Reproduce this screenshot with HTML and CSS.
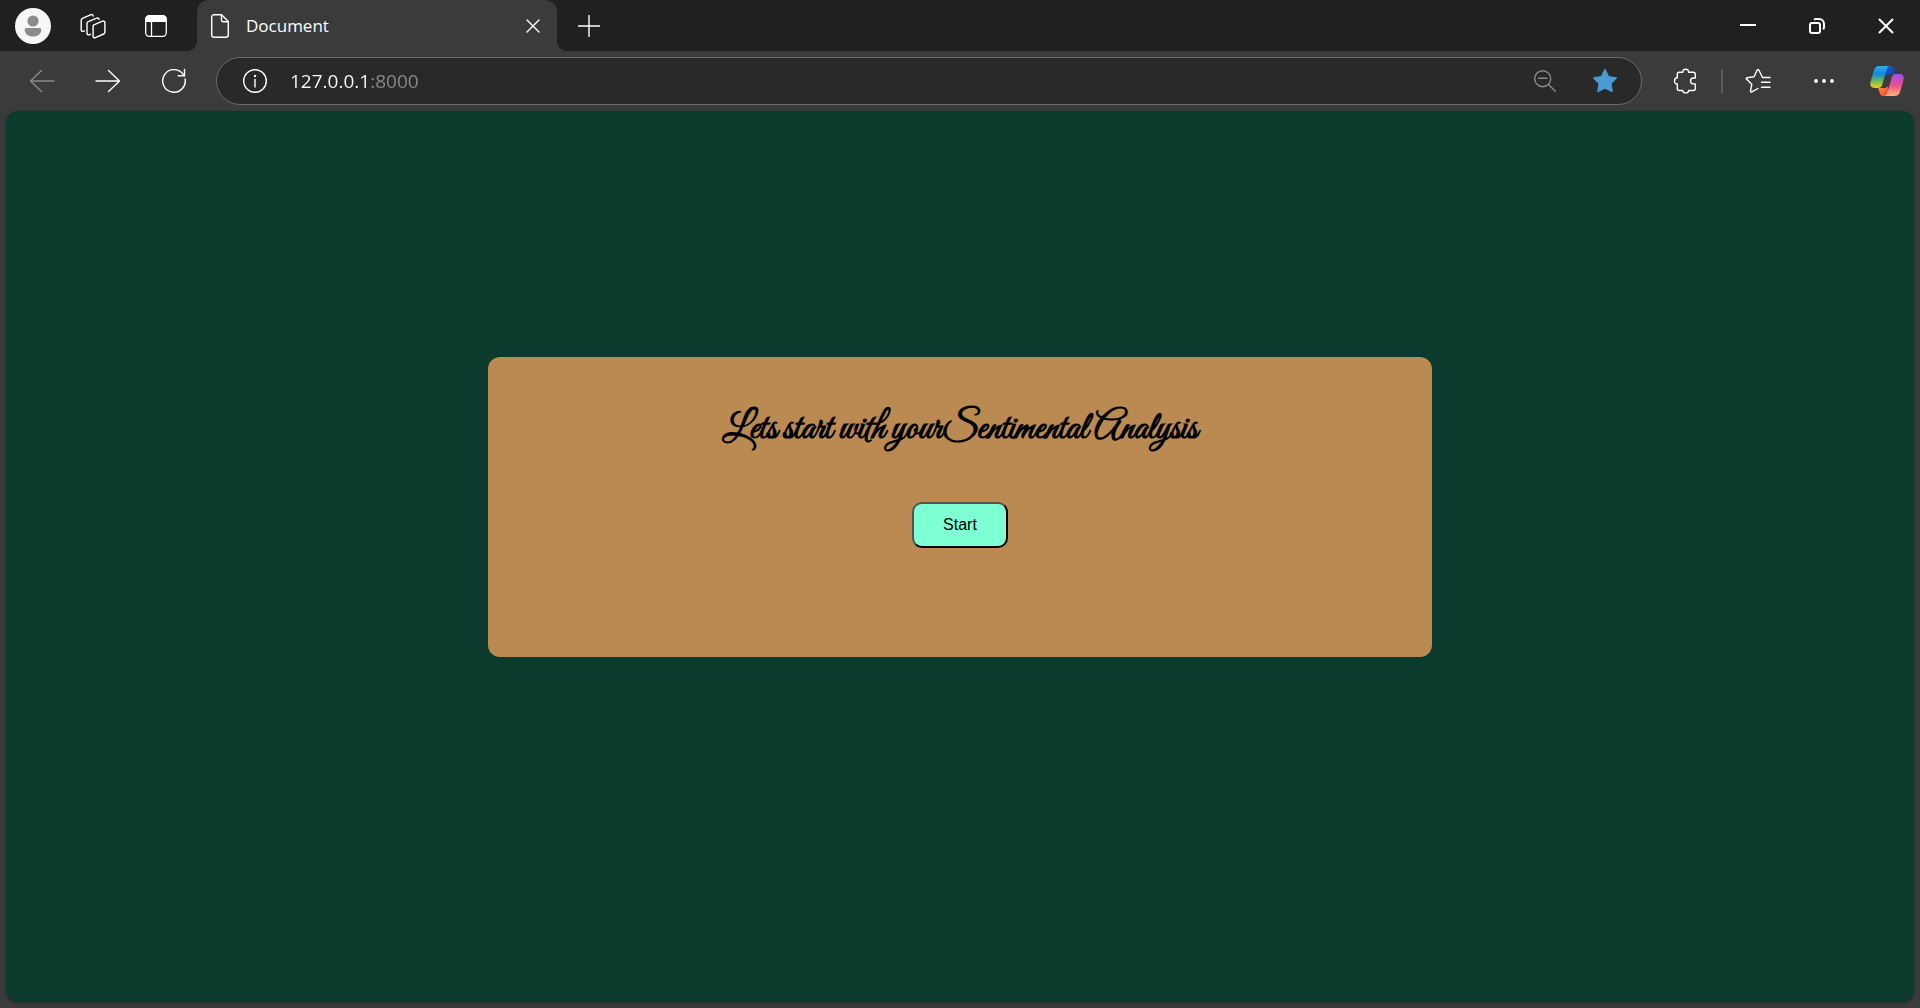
FILE: index.html
```html
<!DOCTYPE html>
<html lang="en">
<head>
<meta charset="utf-8">
<meta name="viewport" content="width=device-width, initial-scale=1">
<title>Document</title>
<link rel="stylesheet" href="styles.css">
</head>
<body>
<header class="tab-strip">
  <button class="icon-button profile" aria-label="Profile">
    <svg width="36" height="36" viewBox="0 0 36 36"><circle cx="18" cy="18" r="18" fill="#f7f7f7"/><circle cx="18" cy="13" r="5.6" fill="#8b8b8b"/><path d="M11.5 20h13a1.8 1.8 0 0 1 1.8 1.8C26.300 26 22.600 28.600 18 28.600S9.700 26 9.700 21.800A1.800 1.800 0 0 1 11.500 20z" fill="#8b8b8b"/></svg>
  </button>
  <button class="icon-button workspaces" aria-label="Workspaces">
    <svg class="line" width="26" height="26" viewBox="0 0 26 26"><path d="M13.800 11.800 22.600 8.200a1.600 1.600 0 0 1 2.300 1.500v9.400a2 2 0 0 1-1.200 1.900l-8.400 3.600a1.500 1.500 0 0 1-2.200-1.400v-9.400a2 2 0 0 1 .7-2z"/><path d="M10.500 21.300 9 21.800a1.500 1.500 0 0 1-2-1.400V10.600a2.200 2.200 0 0 1 1.300-2l8.500-3.500a1.700 1.700 0 0 1 2.300 1.300"/><path d="M4.500 17.900 3.200 18.300a1.500 1.500 0 0 1-2-1.400V7.300a2.200 2.200 0 0 1 1.300-2L11 1.700a1.700 1.700 0 0 1 2.300 1.300"/></svg>
  </button>
  <button class="icon-button tab-actions" aria-label="Tab actions">
    <svg width="22" height="22" viewBox="0 0 22 22"><rect x=".7" y=".7" width="20.600" height="20.600" rx="3.500" fill="none" stroke="#fff" stroke-width="1.300"/><path d="M.5 7V4A3.500 3.500 0 0 1 4 .5h14A3.500 3.500 0 0 1 21.500 4v3z" fill="#fff"/><path d="M6.500 6v15" stroke="#fff" stroke-width="1.300"/></svg>
  </button>
  <div class="tab">
    <svg class="line" width="18" height="24" viewBox="0 0 18 24"><path d="M3 .7h7.500l6.800 6.800v13.300a2.500 2.500 0 0 1-2.500 2.500H3a2.300 2.300 0 0 1-2.300-2.300V3A2.300 2.300 0 0 1 3 .7z"/><path d="M10.500.9v5.300a1.500 1.500 0 0 0 1.500 1.500h5.200"/></svg>
    <span class="tab-title">Document</span>
    <button class="icon-button tab-close" aria-label="Close tab"><svg class="line" width="14" height="14" viewBox="0 0 14 14"><path d="m1 1 12 12M13 1 1 13"/></svg></button>
  </div>
  <button class="icon-button new-tab" aria-label="New tab"><svg class="line" width="22" height="22" viewBox="0 0 22 22"><path d="M11 .5v21M.5 11h21"/></svg></button>
  <div class="window-controls">
    <button class="icon-button" aria-label="Minimize"><svg class="bold-line" width="16" height="16" viewBox="0 0 16 16"><path d="M0 7h16"/></svg></button>
    <button class="icon-button" aria-label="Restore"><svg class="bold-line" width="16" height="16" viewBox="0 0 16 16"><rect x="1" y="5" width="10" height="10" rx="2"/><path d="M5 1.500A5 5 0 0 1 7 1h3a5 5 0 0 1 5 5v3a4 4 0 0 1-.8 2.300"/></svg></button>
    <button class="icon-button" aria-label="Close window"><svg class="bold-line" width="16" height="16" viewBox="0 0 16 16"><path d="m1 1 14 14M15 1 1 15"/></svg></button>
  </div>
</header>
<nav class="toolbar" aria-label="Browser toolbar">
  <button class="icon-button tool back" aria-label="Back"><svg class="line" width="26" height="24" viewBox="0 0 26 24"><path d="M25 12H1.500M12.500 1.500 1.500 12l11 10.500"/></svg></button>
  <button class="icon-button tool" aria-label="Forward"><svg class="line" width="26" height="24" viewBox="0 0 26 24"><path d="M1 12h23.500M13.500 1.500l11 10.500-11 10.500"/></svg></button>
  <button class="icon-button tool" aria-label="Reload"><svg class="line" width="26" height="26" viewBox="0 0 26 26"><path d="M24.100 11A11.300 11.300 0 1 1 21.500 5.500L23.400 7.700"/><path d="M23.500 1.500v6.300h-6.300"/></svg></button>
  <div class="address-bar">
    <svg class="line" width="26" height="26" viewBox="0 0 26 26"><circle cx="13" cy="13" r="11.300"/><path d="M13 11.500v7.500"/><circle cx="13" cy="8" r=".5" fill="#fff"/></svg>
    <input class="address" type="text" value="127.0.0.1:8000" aria-label="Address">
    <button class="icon-button address-action" aria-label="Zoom"><svg class="line muted" width="24" height="24" viewBox="0 0 24 24"><circle cx="9.700" cy="9.700" r="8"/><path d="M5.500 9.200h8.500M15.500 15.500l6.800 6.800"/></svg></button>
    <button class="icon-button address-action" aria-label="Favorite"><svg width="26" height="26" viewBox="0 0 26 26"><path d="m13 1.800 3.500 7 7.700 1.200-5.500 5.500 1.300 7.800-7-3.600-7 3.600 1.300-7.800L1.800 10l7.700-1.200z" fill="#4a9ad4" stroke="#4a9ad4" stroke-width="1.600" stroke-linejoin="round"/></svg></button>
  </div>
  <button class="icon-button tool extensions" aria-label="Extensions"><svg class="line" width="24" height="26" viewBox="0 0 24 26"><path d="M6.300 4.300h3.500C9.700 2.300 10.900 1.200 12.700 1.200s3 1.100 2.900 3.100h4.700a2 2 0 0 1 2 2v3.700h-1.800a2.900 2.900 0 0 0 0 5.900h1.800v4.600a2 2 0 0 1-2 2h-4.700c.1 1.800-1.300 2.400-2.900 2.400s-3-.6-2.900-2.400H6.300a2 2 0 0 1-2-2v-4.500C2.500 16.100 1.500 14.800 1.500 13s1-3.100 2.800-3.200V6.300a2 2 0 0 1 2-2z"/></svg></button>
  <span class="divider"></span>
  <button class="icon-button tool" aria-label="Favorites"><svg class="line" width="26" height="26" viewBox="0 0 26 26"><path d="M25 9.500h-7.500L13.800 2a.9.9 0 0 0-1.600 0L9 8.700 2 9.700a.8.8 0 0 0-.5 1.400L6.800 16.200 5.500 23a.9.900 0 0 0 1.300.9L13 20.500"/><path d="M16.500 14.300H25M16.500 19.300H25"/></svg></button>
  <button class="icon-button tool" aria-label="Settings and more"><svg width="20" height="6" viewBox="0 0 20 6" fill="#fff"><circle cx="2" cy="3" r="1.900"/><circle cx="10" cy="3" r="1.900"/><circle cx="18" cy="3" r="1.900"/></svg></button>
  <button class="icon-button copilot" aria-label="Copilot">
    <svg width="34" height="30" viewBox="0 0 34 30">
      <defs>
        <linearGradient id="left" x1="0" y1="0" x2="0" y2="1"><stop offset="0" stop-color="#27b4f2"/><stop offset=".35" stop-color="#1685dd"/><stop offset=".62" stop-color="#54b46b"/><stop offset="1" stop-color="#f7cd0b"/></linearGradient>
        <linearGradient id="right" x1="0" y1="0" x2="0" y2="1"><stop offset="0" stop-color="#9c50f0"/><stop offset=".5" stop-color="#ec4f91"/><stop offset="1" stop-color="#ffb16b"/></linearGradient>
        <linearGradient id="top" x1="0" y1="0" x2="1" y2="1"><stop offset="0" stop-color="#0f61d5"/><stop offset="1" stop-color="#1738ba"/></linearGradient>
        <linearGradient id="bottom" x1="0" y1="0" x2="1" y2="1"><stop offset="0" stop-color="#ff9c3b"/><stop offset="1" stop-color="#ef3d35"/></linearGradient>
      </defs>
      <path d="M15 0h5c2 0 3 .8 3.600 2.800L25.300 8H20c-2 0-3 .8-3.500 2.300z" fill="url(#top)"/>
      <path d="M19 30h-5.500c-2 0-3-.8-3.600-2.800L8.200 22H14c2 0 3-.8 3.500-2.300z" fill="url(#bottom)"/>
      <path d="M9.500 0H20c-2 0-2.700 1.400-3.200 3.200l-4.600 15.500C11.500 21 10.300 22 8 22H4.500C1 22-.5 19.800.5 16L3.800 4.600C4.800 1.300 6.500 0 9.500 0z" fill="url(#left)"/>
      <path d="M24.500 30H14c2 0 2.700-1.400 3.200-3.200l4.600-15.500C22.500 9 23.700 8 26 8h3.500c3.500 0 5 2.200 4 6l-3.300 11.400c-1 3.300-2.700 4.600-5.700 4.600z" fill="url(#right)"/>
    </svg>
  </button>
</nav>
<main class="page">
  <section class="card">
    <h1 class="heading">Lets start with yourSentimental Analysis</h1>
    <button class="start">Start</button>
  </section>
</main>
</body>
</html>
```

FILE: styles.css
```css
* {
  box-sizing: border-box;
}

body {
  margin: 0;
  min-height: 100vh;
  display: flex;
  flex-direction: column;
  background: #3b3b3b;
  color: #fff;
  font-family: "Segoe UI", "Open Sans", "Noto Sans", sans-serif;
}

.icon-button {
  display: flex;
  align-items: center;
  justify-content: center;
  flex: none;
  padding: 0;
  border: 0;
  background: none;
}

.line,
.bold-line {
  flex: none;
  fill: none;
  stroke: #fff;
  stroke-width: 1.4;
  stroke-linecap: round;
  stroke-linejoin: round;
}

.bold-line {
  stroke-width: 2;
  stroke-linecap: butt;
}

.muted,
.back .line {
  stroke: #8a8a8a;
}

/* Tab strip */
.tab-strip {
  display: flex;
  align-items: stretch;
  height: 51px;
  background: #202020;
}

.profile {
  width: 66px;
}

.workspaces {
  width: 54px;
}

.tab-actions {
  width: 72px;
}

.tab {
  position: relative;
  display: flex;
  align-items: center;
  width: 360px;
  margin-left: 5px;
  padding: 0 14px;
  border-radius: 12px 12px 0 0;
  background: #3b3b3b;
}

.tab::before,
.tab::after {
  content: "";
  position: absolute;
  bottom: 0;
  width: 10px;
  height: 10px;
}

.tab::before {
  right: 100%;
  background: radial-gradient(circle at 0 0, transparent 10px, #3b3b3b 10px);
}

.tab::after {
  left: 100%;
  background: radial-gradient(circle at 100% 0, transparent 10px, #3b3b3b 10px);
}

.tab-title {
  flex: 1;
  margin-left: 17px;
  font-size: 17px;
  line-height: 24px;
}

.tab-close {
  width: 20px;
  height: 24px;
}

.new-tab {
  width: 64px;
}

.window-controls {
  display: flex;
  margin-left: auto;
}

.window-controls .icon-button {
  width: 69px;
}

/* Toolbar */
.toolbar {
  display: flex;
  align-items: center;
  height: 60px;
  padding: 0 3px 0 9px;
}

.tool {
  width: 66px;
  height: 48px;
}

.copilot {
  width: 60px;
  height: 48px;
}

.extensions {
  margin-left: 10px;
}

.divider {
  width: 2px;
  height: 24px;
  margin: 0 2px 0 3px;
  background: #5c5c5c;
}

.address-bar {
  display: flex;
  align-items: center;
  flex: 1;
  height: 48px;
  margin-left: 9px;
  padding: 0 6px 0 25px;
  border: 1px solid #6a6a6a;
  border-radius: 24px;
  background: #292929;
}

.address {
  flex: 1;
  min-width: 0;
  margin-left: 22px;
  padding: 0;
  border: 0;
  outline: 0;
  /* The host is white and the port after it is dimmed. */
  background: linear-gradient(90deg, #fff 81px, #8a8a8a 81px);
  -webkit-background-clip: text;
  background-clip: text;
  color: transparent;
  font: inherit;
  font-size: 19px;
  line-height: 28px;
}

.address-action {
  width: 60px;
  height: 40px;
}

/* Page */
.page {
  flex: 1;
  margin: 0 6px 6px;
  padding: 246px 10px 10px;
  border-radius: 12px;
  background: #0c3a2d;
  box-shadow: 0 1px 3px #2c2c2c;
}

.card {
  display: flex;
  flex-direction: column;
  align-items: center;
  width: 50%;
  min-height: 300px;
  margin: 0 auto;
  padding: 53px 20px;
  border-radius: 12px;
  background: #ba8a52;
}

.heading {
  margin: 0;
  color: #000;
  font-family: "Great Vibes", "Liberation Serif", cursive;
  font-size: 38px;
  font-weight: 700;
  line-height: 40px;
  text-align: center;
}

.start {
  margin-top: 52px;
  padding: 12px 29px;
  border: 2px outset #000;
  border-radius: 10px;
  background: #7fffd4;
  color: #000;
  font-family: Arial, "Liberation Sans", sans-serif;
  font-size: 16px;
  line-height: 18px;
}
```
